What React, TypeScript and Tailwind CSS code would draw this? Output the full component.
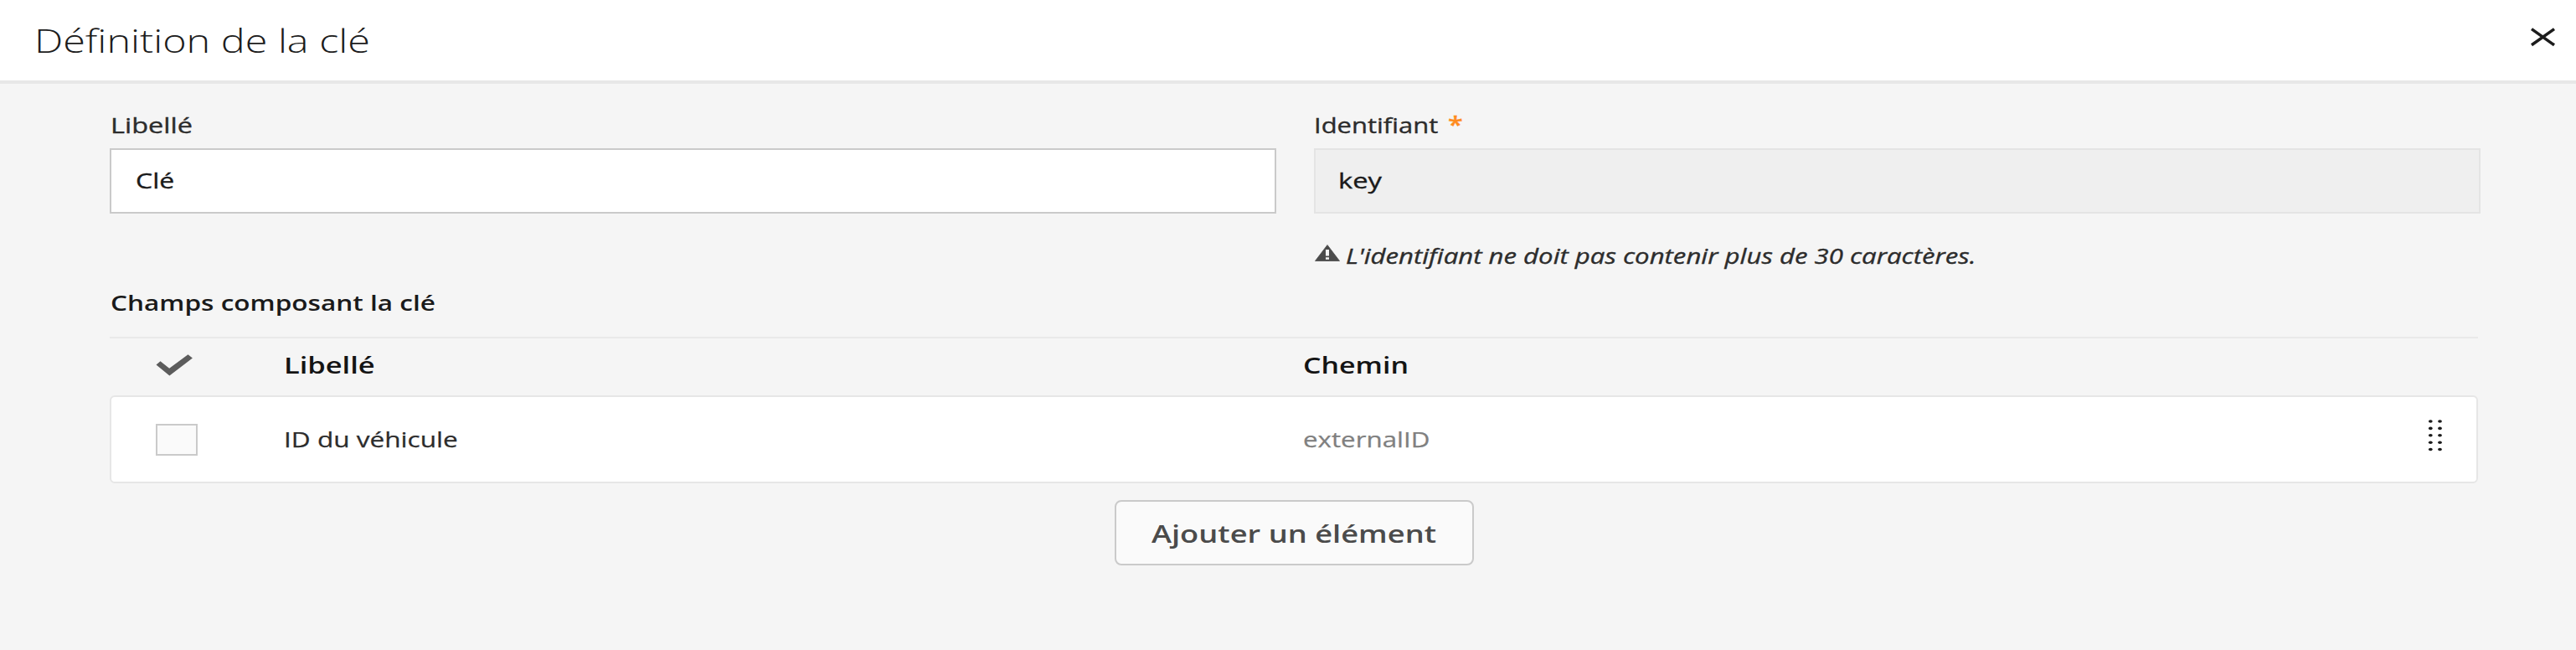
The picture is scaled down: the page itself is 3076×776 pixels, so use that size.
import type { ReactNode } from 'react';

function Stretch({ className, children }: { className: string; children: ReactNode }) {
  return <span className={`block w-max origin-left whitespace-nowrap ${className}`}>{children}</span>;
}

function CloseIcon() {
  return (
    <svg className="h-[24px] w-[32px]" viewBox="0 0 32 24" fill="none" stroke="#1c1c1c" strokeWidth="3.5">
      <path d="M2 2.6 L29 21.8 M29 2.6 L2 21.8" />
    </svg>
  );
}

function WarningIcon() {
  return (
    <svg className="h-[20px] w-[30px]" viewBox="0 0 30 20">
      <path d="M15 0.5 L29.5 19.5 H0.5 Z" fill="#4b4b4b" stroke="#4b4b4b" strokeWidth="0.8" strokeLinejoin="round" />
      <path d="M13 6 H17 V13.5 H13 Z M13 15.2 H17 V17.8 H13 Z" fill="#f5f5f5" />
    </svg>
  );
}

function CheckIcon() {
  return (
    <svg className="h-[27px] w-[46px]" viewBox="0 0 46 27">
      <path d="M0.5 13.5 L5.5 9.3 L16.2 17.8 L38.5 1.3 L43.9 5.5 L16.4 26.5 Z" fill="#5c5c5c" />
    </svg>
  );
}

function DragHandle() {
  return (
    <svg className="h-[40px] w-[18px]" viewBox="0 0 18 40" fill="#1c1c1c">
      {[3, 11.4, 19.8, 28.2, 36.5].map((y) => (
        <g key={y}>
          <ellipse cx="3.3" cy={y} rx="2.4" ry="1.8" />
          <ellipse cx="14.5" cy={y} rx="2.4" ry="1.8" />
        </g>
      ))}
    </svg>
  );
}

export default function App() {
  return (
    <div className="h-[776px] w-full overflow-hidden bg-[#f5f5f5] font-['Open_Sans',sans-serif] text-[25px] leading-[24px] text-[#2c2c2c]">
      <header className="flex h-[100px] items-center justify-between border-b-4 border-[#e7e7e7] bg-white pr-[23px] pl-[41px]">
        <Stretch className="scale-x-[1.276] text-[38px] leading-[48px] font-light text-[#1c1c1c]">Définition de la clé</Stretch>
        <button className="mb-[8px]" aria-label="Fermer">
          <CloseIcon />
        </button>
      </header>

      <main className="pr-[115px] pl-[131px]">
        <div className="grid grid-cols-[1393px_1393px] gap-x-[45px] pt-[37px] [-webkit-text-stroke:0.35px]">
          <div>
            <Stretch className="ml-px scale-x-[1.3]">Libellé</Stretch>
            <div className="mt-[16px] flex h-[78px] items-center border-2 border-[#cacaca] bg-white pb-[2px] pl-[29px] text-[#1a1a1a]">
              <Stretch className="scale-x-[1.28]">Clé</Stretch>
            </div>
          </div>
          <div>
            <div className="flex">
              <Stretch className="w-[160px]! scale-x-[1.238]">Identifiant</Stretch>
              <Stretch className="scale-x-[1.2] text-[27px] font-semibold text-[#ff8c1f]">*</Stretch>
            </div>
            <div className="mt-[16px] flex h-[78px] items-center border-2 border-[#e4e4e4] bg-[#efefef] pb-[2px] pl-[27px] text-[#1a1a1a]">
              <Stretch className="scale-x-[1.31]">key</Stretch>
            </div>
            <div className="mt-[37px] flex h-[26px] gap-[7px] pl-px">
              <WarningIcon />
              <Stretch className="scale-x-[1.246] pt-px italic">L'identifiant ne doit pas contenir plus de 30 caractères.</Stretch>
            </div>
          </div>
        </div>

        <Stretch className="mt-[31px] ml-px scale-x-[1.262] font-semibold text-[#1a1a1a]">Champs composant la clé</Stretch>

        <section className="mt-[29px] w-[2828px]">
          <div className="grid h-[70px] grid-cols-[208px_1217px_1fr] items-center border-t-2 border-[#e9e9e9] pb-[5px] text-[26.5px] font-semibold text-[#141414]">
            <div className="pl-[55px]">
              <CheckIcon />
            </div>
            <Stretch className="scale-x-[1.3]">Libellé</Stretch>
            <Stretch className="scale-x-[1.28]">Chemin</Stretch>
          </div>
          <div className="grid h-[105px] grid-cols-[206px_1217px_1fr_58px] items-center rounded-[6px] border-2 border-[#e6e6e6] bg-white [-webkit-text-stroke:0.25px]">
            <div className="pl-[53px]">
              <div className="h-[38px] w-[50px] border-2 border-[#cacaca] bg-[#fafafa]" />
            </div>
            <Stretch className="scale-x-[1.262] pb-px">ID du véhicule</Stretch>
            <Stretch className="scale-x-[1.252] pb-px text-[#808080]">externalID</Stretch>
            <div className="pb-[9px]">
              <DragHandle />
            </div>
          </div>
        </section>

        <button className="mt-[20px] ml-[1200px] flex h-[78px] w-[429px] items-center rounded-[8px] border-2 border-[#cacaca] bg-[#fafafa] pt-[2px] pl-[42px] text-[28px] font-semibold text-[#4b4b4b]">
          <Stretch className="scale-x-[1.296]">Ajouter un élément</Stretch>
        </button>
      </main>
    </div>
  );
}
